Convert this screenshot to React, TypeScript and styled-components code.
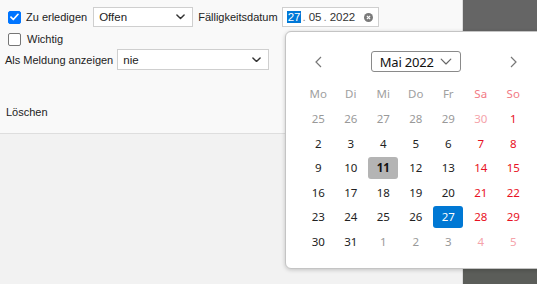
import React from 'react'
import styled, { createGlobalStyle } from 'styled-components'

const GlobalStyle = createGlobalStyle`
  html, body {
    margin: 0;
    padding: 0;
    width: 537px;
    height: 284px;
    overflow: hidden;
  }
  body {
    font-family: "Liberation Sans", Arial, sans-serif;
    color: #222;
  }
`

const Screen = styled.div`
  position: relative;
  display: flex;
  width: 537px;
  height: 284px;
  overflow: hidden;
`

const Panel = styled.div`
  width: 463px;
  flex-shrink: 0;
  display: flex;
  flex-direction: column;
  background: #f2f2f2;
  border-right: 1px solid #dcdcdc;
  box-sizing: border-box;
`

const Form = styled.div`
  height: 134px;
  box-sizing: border-box;
  background: #f9f9f9;
  border-bottom: 1px solid #dedede;
  padding: 7px 0 0 5px;
  display: flex;
  flex-direction: column;
  font-size: 11px;
`

const Row = styled.div<{ $gap?: number }>`
  display: flex;
  align-items: center;
  gap: ${(p) => p.$gap ?? 4}px;
  height: ${(p) => (p.$gap ? 21 : 20)}px;
`

const CheckRow = styled.label`
  display: flex;
  align-items: center;
  gap: 5px;
  height: 18px;
  margin-top: 3px;
  margin-bottom: 1px;
`

const Box = styled.span<{ $checked?: boolean }>`
  width: 13px;
  height: 13px;
  margin-left: 3px;
  box-sizing: border-box;
  border-radius: 2px;
  display: inline-flex;
  align-items: center;
  justify-content: center;
  background: ${(p) => (p.$checked ? '#0075ff' : '#fff')};
  border: 1px solid ${(p) => (p.$checked ? '#0075ff' : '#767676')};
`

const Label = styled.span<{ $offset?: number }>`
  white-space: nowrap;
  margin-left: ${(p) => p.$offset ?? 0}px;
`

const Select = styled.div<{ $width: number }>`
  width: ${(p) => p.$width}px;
  height: 100%;
  box-sizing: border-box;
  border: 1px solid #cfcfcf;
  background: #fff;
  display: flex;
  align-items: center;
  justify-content: space-between;
  padding: 0 7px 0 5px;
  font-size: 11.5px;
`

const DateInput = styled.div`
  width: 97px;
  height: 100%;
  box-sizing: border-box;
  border: 1px solid #cfcfcf;
  background: #fff;
  display: flex;
  align-items: center;
  padding: 0 5px 0 4px;
  font-size: 11.5px;
  color: #333;
`

const Segment = styled.span<{ $active?: boolean }>`
  padding: 0 1px;
  line-height: 12px;
  background: ${(p) => (p.$active ? '#0078d7' : 'transparent')};
  color: ${(p) => (p.$active ? '#fff' : '#333')};
`

const Dot = styled.span`
  color: #888;
  padding: 0 2px 0 1px;
`

const Clear = styled.span`
  margin-left: auto;
  display: inline-flex;
`

const DeleteLink = styled.div`
  margin-top: 36px;
  margin-left: 1px;
  font-size: 11px;
`

const Backdrop = styled.div`
  flex: 1;
  background: linear-gradient(#656565 0, #656565 50%, #5b5d59 50%);
`

const Popup = styled.div`
  position: absolute;
  left: 285px;
  top: 31px;
  width: 262px;
  height: 238px;
  box-sizing: border-box;
  background: #fff;
  border: 1px solid #c4c4c4;
  border-radius: 6px;
  box-shadow: 0 1px 4px rgba(0, 0, 0, 0.2);
  padding: 19px 0 0 16px;
  font-family: "Noto Sans", "Open Sans", sans-serif;
`

const Grid = styled.div`
  display: grid;
  grid-template-columns: repeat(7, 32.5px);
  grid-auto-rows: 24.6px;
  align-items: center;
  justify-items: center;
`

const Header = styled(Grid)`
  grid-auto-rows: 21px;
  margin-bottom: 9.7px;
`

const Arrow = styled.span`
  display: inline-flex;
  color: #777;
`

const MonthButton = styled.div`
  grid-column: 2 / span 5;
  width: 90px;
  height: 21px;
  box-sizing: border-box;
  border: 1px solid #8a8a8a;
  border-radius: 3px;
  display: flex;
  align-items: center;
  justify-content: center;
  gap: 6px;
  font-size: 13px;
  letter-spacing: -0.2px;
  color: #111;
`

const DayName = styled.span<{ $weekend?: boolean }>`
  font-size: 11.5px;
  color: ${(p) => (p.$weekend ? '#f27a85' : '#a0a0a0')};
`

type DayKind = 'normal' | 'other' | 'today' | 'selected'

const Day = styled.span<{ $kind: DayKind; $weekend: boolean }>`
  width: 30px;
  height: 22px;
  border-radius: 3px;
  display: flex;
  align-items: center;
  justify-content: center;
  font-size: 11.5px;
  font-weight: ${(p) => (p.$kind === 'today' ? 700 : 400)};
  background: ${(p) =>
    p.$kind === 'today' ? '#b4b4b4' : p.$kind === 'selected' ? '#0078d4' : 'transparent'};
  color: ${(p) => {
    if (p.$kind === 'selected') return '#fff'
    if (p.$kind === 'other') return p.$weekend ? '#f5a3aa' : '#999'
    if (p.$kind === 'today') return '#111'
    return p.$weekend ? '#e81123' : '#222'
  }};
`

const Chevron = ({ size = 9, color = '#333', width = 1.6 }: { size?: number; color?: string; width?: number }) => (
  <svg width={size} height={size * 0.6} viewBox='0 0 10 6' fill='none'>
    <path d='M1 1l4 4 4-4' stroke={color} strokeWidth={width} strokeLinecap='round' strokeLinejoin='round' />
  </svg>
)

const CheckMark = () => (
  <svg width='9' height='8' viewBox='0 0 9 8' fill='none'>
    <path d='M1 4.2l2.3 2.3L8 1.3' stroke='#fff' strokeWidth='1.7' strokeLinecap='round' strokeLinejoin='round' />
  </svg>
)

const dayNames = ['Mo', 'Di', 'Mi', 'Do', 'Fr', 'Sa', 'So']

type Cell = { n: number; kind: DayKind }

const buildDays = (): Cell[] => {
  const cells: Cell[] = []
  for (let n = 25; n <= 30; n++) cells.push({ n, kind: 'other' })
  for (let n = 1; n <= 31; n++) {
    cells.push({ n, kind: n === 11 ? 'today' : n === 27 ? 'selected' : 'normal' })
  }
  for (let n = 1; n <= 5; n++) cells.push({ n, kind: 'other' })
  return cells
}

export default function App() {
  const days = buildDays()
  return (
    <>
      <GlobalStyle />
      <Screen>
        <Panel>
          <Form>
            <Row>
              <Box $checked>
                <CheckMark />
              </Box>
              <Label $offset={1}>Zu erledigen</Label>
              <Select $width={100} style={{ marginLeft: 2 }}>
                <span>Offen</span>
                <Chevron />
              </Select>
              <Label $offset={1}>Fälligkeitsdatum</Label>
              <DateInput>
                <Segment $active>27</Segment>
                <Dot>.</Dot>
                <Segment>05</Segment>
                <Dot>.</Dot>
                <Segment>2022</Segment>
                <Clear>
                  <svg width='9' height='9' viewBox='0 0 10 10'>
                    <circle cx='5' cy='5' r='5' fill='#7a7a7a' />
                    <path d='M3.2 3.2l3.6 3.6M6.8 3.2l-3.6 3.6' stroke='#fff' strokeWidth='1.3' />
                  </svg>
                </Clear>
              </DateInput>
            </Row>
            <CheckRow>
              <Box />
              <Label $offset={1}>Wichtig</Label>
            </CheckRow>
            <Row $gap={4}>
              <Label>Als Meldung anzeigen</Label>
              <Select $width={152}>
                <span>nie</span>
                <Chevron />
              </Select>
            </Row>
            <DeleteLink>Löschen</DeleteLink>
          </Form>
        </Panel>
        <Backdrop />
        <Popup>
          <Header>
            <Arrow>
              <svg width='7' height='12' viewBox='0 0 7 12' fill='none'>
                <path d='M6 1L1 6l5 5' stroke='#777' strokeWidth='1.2' />
              </svg>
            </Arrow>
            <MonthButton>
              <span>Mai 2022</span>
              <Chevron size={12} color='#666' width={1} />
            </MonthButton>
            <Arrow>
              <svg width='7' height='12' viewBox='0 0 7 12' fill='none'>
                <path d='M1 1l5 5-5 5' stroke='#777' strokeWidth='1.2' />
              </svg>
            </Arrow>
          </Header>
          <Grid>
            {dayNames.map((d, i) => (
              <DayName key={d} $weekend={i >= 5}>
                {d}
              </DayName>
            ))}
            {days.map((c, i) => (
              <Day key={i} $kind={c.kind} $weekend={i % 7 >= 5}>
                {c.n}
              </Day>
            ))}
          </Grid>
        </Popup>
      </Screen>
    </>
  )
}
